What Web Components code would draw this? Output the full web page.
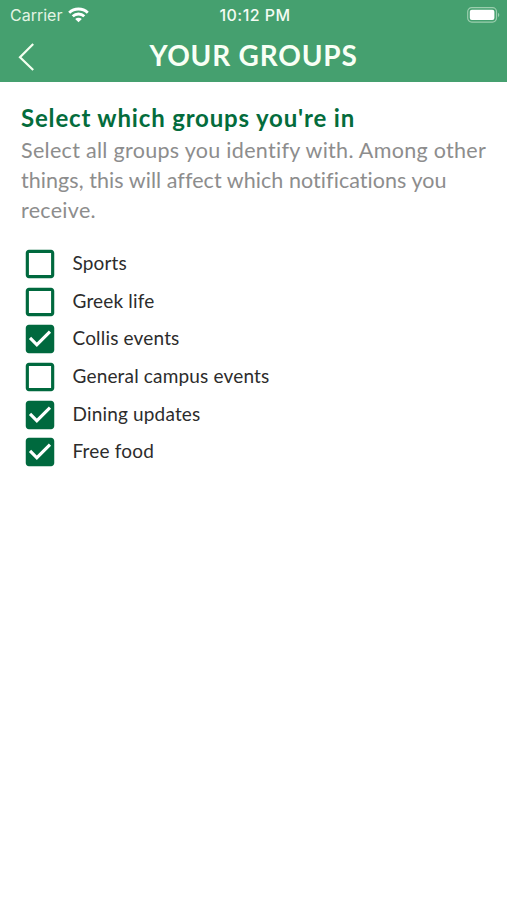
<!DOCTYPE html>
<html lang="en">
<head>
<meta charset="utf-8">
<title>Your Groups</title>
<style>
html, body { margin: 0; background: #fff; }
body { font-family: Lato, "Open Sans", sans-serif; }
</style>
</head>
<body>
<groups-screen></groups-screen>
<script>
const define = (name, html) => customElements.define(name, class extends HTMLElement {
  constructor() {
    super();
    const t = document.createElement('template');
    t.innerHTML = html;
    this.attachShadow({ mode: 'open' }).append(t.content.cloneNode(true));
  }
});

define('status-bar', `
<style>
:host { display: grid; grid-template-columns: 1fr auto 1fr; align-items: center; height: 30px; padding: 0 7px 0 10px; box-sizing: border-box; color: #f4fbf3; font: 16px/30px Inter, sans-serif; }
.left { display: flex; align-items: center; gap: 6px; letter-spacing: 0; color: #e4f4e4; }
.time { font-weight: 500; letter-spacing: .45px; }
.battery { justify-self: end; }
svg { display: block; }
</style>
<div class="left"><span>Carrier</span>
<svg width="21" height="16" viewBox="0 0 21 16" fill="none" stroke="#fff" stroke-width="2.9"><path d="M1.2 5.7C6.4.8 14.6.8 19.8 5.7M4.7 9.3C8 6.3 13 6.3 16.3 9.3"/><path d="M10.5 15.2L7.2 12C9 10.4 12 10.4 13.8 12Z" fill="#fff" stroke="none"/></svg></div>
<div class="time">10:12 PM</div>
<svg class="battery" width="33" height="16" viewBox="0 0 33 16"><rect x=".7" y=".7" width="28.8" height="14.4" rx="4" fill="none" stroke="#9bceae" stroke-width="1.2"/><rect x="2.8" y="2.8" width="24.6" height="10.2" rx="2" fill="#fff"/><path d="M31 5.8Q33.6 8 31 10.2Z" fill="#9bceae"/></svg>
`);

define('nav-bar', `
<style>
:host { display: grid; grid-template-columns: 40px 1fr 40px; align-items: center; height: 51px; color: #f8fff5; }
svg { display: block; margin: 3px 0 0 18px; }
h1 { margin: -1px 0 0; text-align: center; font-size: 28px; line-height: 50px; font-weight: 700; white-space: nowrap; letter-spacing: .8px; }
</style>
<svg width="17" height="28" viewBox="0 0 17 28" fill="none" stroke="#f4fff0" stroke-width="2.2"><path d="M15.2 1L2 14.2L15.2 27"/></svg>
<h1><slot></slot></h1>
`);

define('group-intro', `
<style>
:host { display: block; padding: 20px 0 0 21px; white-space: nowrap; }
h2 { margin: 0; font-size: 24px; line-height: 32px; font-weight: 700; color: #046c3c; letter-spacing: .83px; }
p { margin: 1px 0 0; font-size: 21.5px; line-height: 30px; color: #8d8d8d; }
p span { display: block; letter-spacing: .3px; }
p .b { letter-spacing: .06px; }
</style>
<h2>Select which groups you're in</h2>
<p><span class="a">Select all groups you identify with. Among other</span><span class="b">things, this will affect which notifications you</span><span class="c">receive.</span></p>
`);

define('group-option', `
<style>
:host { display: flex; align-items: center; gap: 13.5px; height: 37.7px; font-size: 19px; color: #2c2c2c; letter-spacing: .17px; white-space: nowrap; }
svg { display: block; width: 38px; height: 38px; fill: #00693e; }
.on, :host([checked]) .off { display: none; }
:host([checked]) .on { display: inline; }
.label { line-height: 36px; padding-bottom: 2px; }
</style>
<svg viewBox="0 0 24 24"><path class="off" d="M19 5v14H5V5h14m0-2H5c-1.1 0-2 .9-2 2v14c0 1.1.9 2 2 2h14c1.1 0 2-.9 2-2V5c0-1.1-.9-2-2-2z"/><path class="on" d="M19 3H5c-1.11 0-2 .9-2 2v14c0 1.1.89 2 2 2h14c1.11 0 2-.9 2-2V5c0-1.1-.89-2-2-2zm-9 14l-5-5 1.41-1.41L10 14.17l7.59-7.59L19 8l-9 9z"/></svg>
<span class="label"><slot></slot></span>
`);

define('groups-screen', `
<style>
:host { display: block; min-height: 900px; background: #fff; }
header { height: 81.5px; background: #45a06f; }
.list { display: flex; flex-direction: column; padding: 20.5px 0 0 21px; }
</style>
<header><status-bar></status-bar><nav-bar>YOUR GROUPS</nav-bar></header>
<group-intro></group-intro>
<div class="list">
<group-option>Sports</group-option>
<group-option>Greek life</group-option>
<group-option checked>Collis events</group-option>
<group-option>General campus events</group-option>
<group-option checked>Dining updates</group-option>
<group-option checked>Free food</group-option>
</div>
`);
</script>
</body>
</html>
